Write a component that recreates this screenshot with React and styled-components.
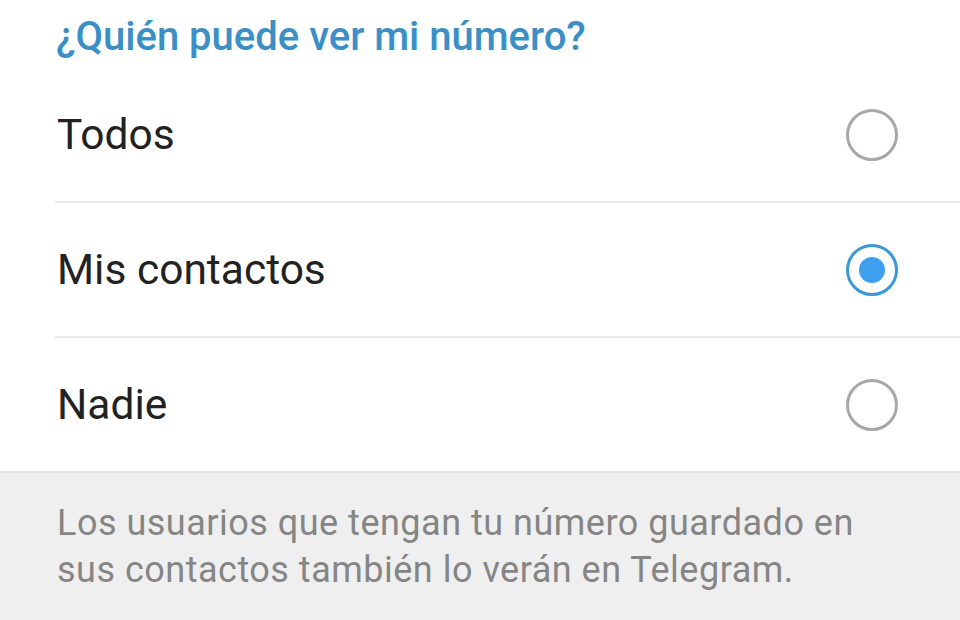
import React, { useState } from "react";
import styled, { createGlobalStyle } from "styled-components";

const GlobalStyle = createGlobalStyle`
  html, body {
    margin: 0;
    padding: 0;
    background: #ffffff;
  }
  body {
    font-family: Roboto, "Noto Sans", "Liberation Sans", sans-serif;
  }
`;

const Screen = styled.div`
  width: 960px;
  height: 620px;
  overflow: hidden;
  display: flex;
  flex-direction: column;
  background: #ffffff;
`;

const Section = styled.section`
  background: #ffffff;
`;

const Title = styled.h2`
  margin: 0;
  padding: 12px 0 0 56px;
  height: 60px;
  box-sizing: border-box;
  font-size: 40px;
  line-height: 50px;
  font-weight: 500;
  color: #3a8fc6;
`;

const OptionList = styled.ul`
  list-style: none;
  margin: 0;
  padding: 0;
`;

const OptionRow = styled.li`
  display: flex;
  align-items: center;
  justify-content: space-between;
  height: ${(props) => (props.$first ? "141px" : "133px")};
  padding: ${(props) => (props.$first ? "8px" : "0")} 62px 0 57px;
  box-sizing: border-box;
  cursor: pointer;
`;

const Divider = styled.li`
  margin-left: 55px;
  height: 2px;
  background: #e8e8e8;
`;

const Label = styled.span`
  font-size: 42.5px;
  color: #222222;
`;

const Radio = styled.span`
  width: 52px;
  height: 52px;
  box-sizing: border-box;
  border-radius: 50%;
  border: 3px solid ${(props) => (props.$checked ? "#3a98d6" : "#a8a8a8")};
  display: flex;
  align-items: center;
  justify-content: center;
  &::before {
    content: "";
    width: 26px;
    height: 26px;
    border-radius: 50%;
    background: ${(props) => (props.$checked ? "#3d9fee" : "transparent")};
  }
`;

const Footer = styled.div`
  flex: 1;
  background: #efefef;
  border-top: 2px solid #e3e3e3;
  padding: 27px 30px 0 57px;
`;

const Hint = styled.p`
  margin: 0;
  font-size: 36px;
  line-height: 47px;
  color: #858585;
  letter-spacing: 0.5px;
  white-space: nowrap;
`;

const options = ["Todos", "Mis contactos", "Nadie"];

export default function App() {
  const [selected, setSelected] = useState(1);
  return (
    <Screen>
      <GlobalStyle />
      <Section>
        <Title>¿Quién puede ver mi número?</Title>
        <OptionList>
          {options.map((name, index) => (
            <React.Fragment key={name}>
              <OptionRow $first={index === 0} onClick={() => setSelected(index)}>
                <Label>{name}</Label>
                <Radio $checked={selected === index} />
              </OptionRow>
              {index < options.length - 1 && <Divider />}
            </React.Fragment>
          ))}
        </OptionList>
      </Section>
      <Footer>
        <Hint>
          Los usuarios que tengan tu número guardado en
          <br />
          sus contactos también lo verán en Telegram.
        </Hint>
      </Footer>
    </Screen>
  );
}
